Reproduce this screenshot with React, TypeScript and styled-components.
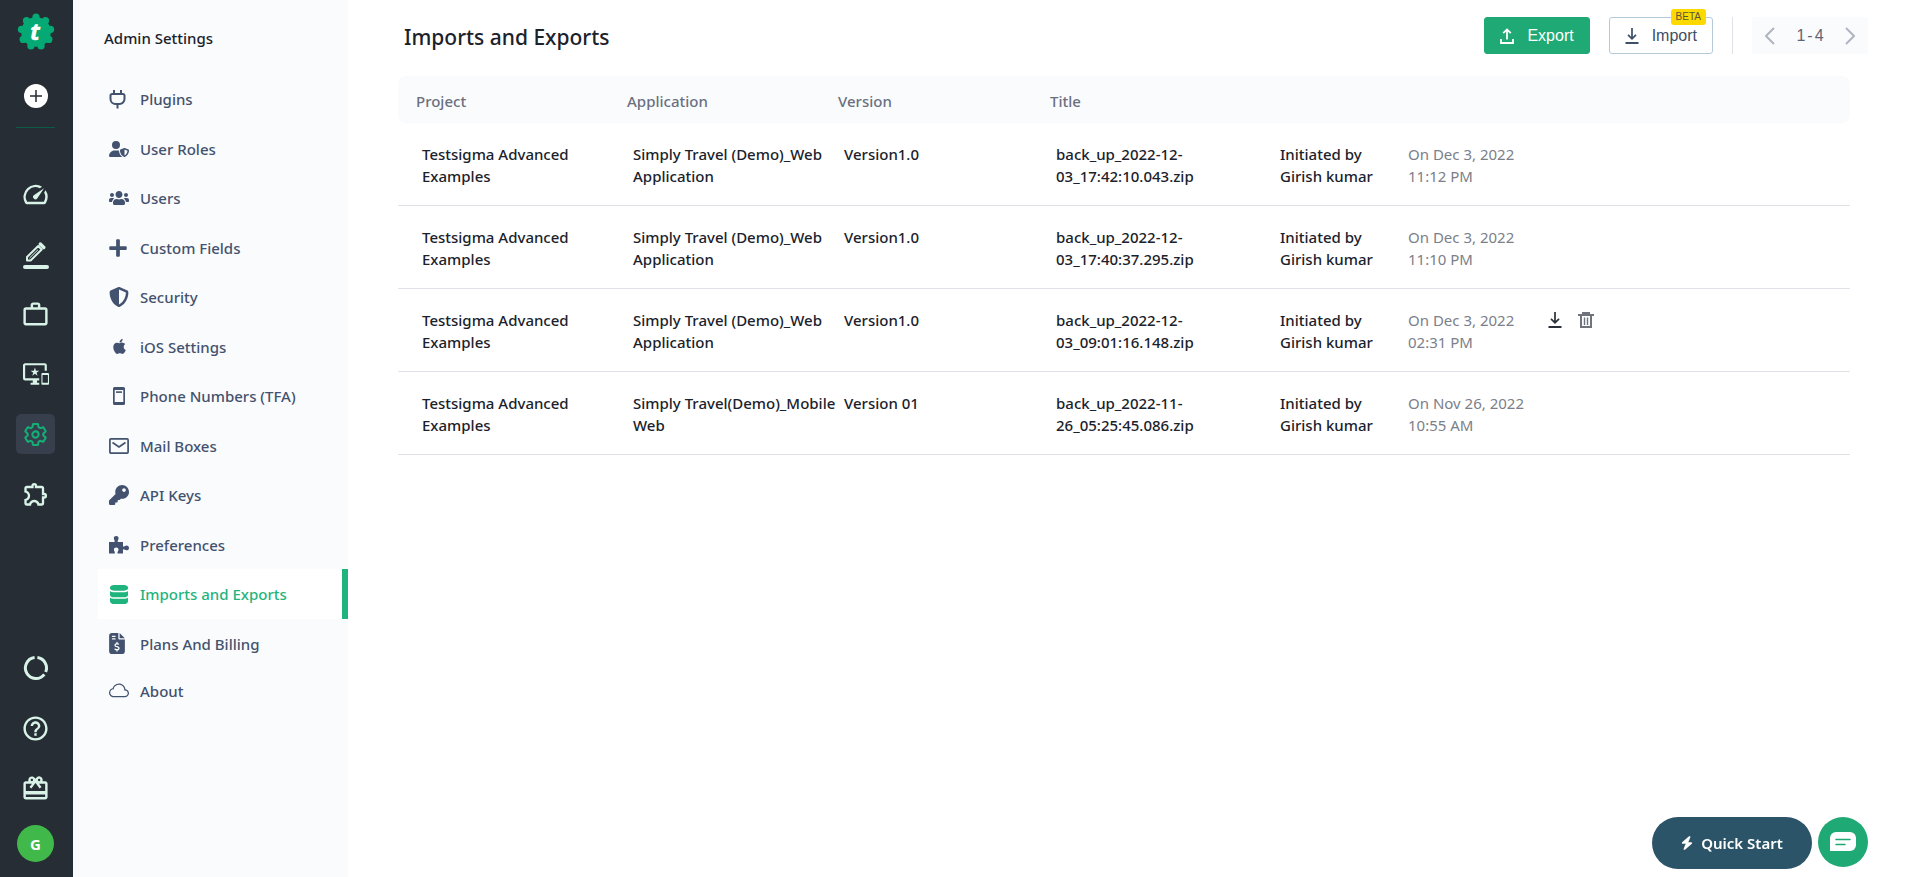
import React from 'react';
import styled, { createGlobalStyle, css } from 'styled-components';
import {
  MdSpeed,
  MdWorkOutline,
  MdOutlineImportantDevices,
  MdOutlineExtension,
  MdHelpOutline,
  MdRedeem,
} from 'react-icons/md';
import { FaUsers, FaPlus, FaApple, FaKey } from 'react-icons/fa';
import { FaUserShield, FaShieldHalved, FaFileInvoiceDollar, FaBolt } from 'react-icons/fa6';
import { IoSettingsOutline } from 'react-icons/io5';
import { BsCloud } from 'react-icons/bs';

const color = {
  rail: '#262d34',
  railTile: '#373e4c',
  railIcon: '#d9f3e8',
  panel: '#fafbfd',
  slate: '#43526e',
  ink: '#1b222b',
  muted: '#6a7080',
  faint: '#7b8089',
  line: '#e0e2e7',
  green: '#1fb47e',
  greenSolid: '#1ea975',
};

const sans = '"Segoe UI", "Noto Sans", sans-serif';
const arial = '"Liberation Sans", Arial, sans-serif';

const GlobalStyle = createGlobalStyle`
  *, *::before, *::after { box-sizing: border-box; }
  body {
    margin: 0;
    background: #fff;
    color: ${color.ink};
    font-family: ${sans};
    font-size: 15px;
    font-weight: 500;
    line-height: 22px;
  }
  button { font: inherit; cursor: pointer; }
  a { color: inherit; text-decoration: none; }
  svg { display: block; flex: none; }
`;

const Page = styled.div`
  display: flex;
  min-height: 100vh;
`;

/* ---------- Icon rail ---------- */

const Rail = styled.nav`
  position: sticky;
  top: 0;
  display: flex;
  flex: none;
  flex-direction: column;
  align-items: center;
  width: 73px;
  height: 100vh;
  padding: 13px 2px 15px 0;
  background: ${color.rail};
`;

const LogoLink = styled.a`
  display: block;
  padding-left: 1px;
`;

const AddButton = styled.button`
  display: grid;
  place-items: center;
  width: 24px;
  height: 24px;
  margin: 33px 0 19px;
  padding: 0;
  border: 0;
  border-radius: 50%;
  background: #fff;
`;

const RailRule = styled.hr`
  width: 39px;
  margin: 0 0 36px;
  border: 0;
  border-top: 1px solid #0b5a45;
`;

const RailGroup = styled.div<{ $bottom?: boolean }>`
  display: flex;
  flex-direction: column;
  ${(p) => p.$bottom && css`margin-top: auto; margin-bottom: 7px;`}
`;

const RailLink = styled.a<{ $active?: boolean }>`
  display: grid;
  place-items: center;
  width: 39px;
  height: 40px;
  margin: 10px 0;
  border-radius: 5px;
  color: ${(p) => (p.$active ? '#12b076' : color.railIcon)};
  background: ${(p) => (p.$active ? color.railTile : 'transparent')};
`;

const Gear = styled(IoSettingsOutline)`
  path { stroke-width: 42px; }
`;

const Avatar = styled.button`
  width: 37px;
  height: 37px;
  padding: 0;
  border: 0;
  border-radius: 50%;
  background: #40b84a;
  color: #fff;
  font-size: 15px;
  font-weight: 700;
`;

/* ---------- Settings menu ---------- */

const Sidebar = styled.aside`
  flex: none;
  width: 275px;
  padding: 27px 0 0 25px;
  background: ${color.panel};
`;

const SidebarTitle = styled.h2`
  margin: 0 0 25px 6px;
  font-size: 15px;
  font-weight: 500;
`;

const Menu = styled.ul`
  margin: 0;
  padding: 0;
  list-style: none;
`;

const MenuItem = styled.li`
  height: 49px;
  &:nth-child(odd) { height: 50px; }
  &:last-child { height: 46px; }
`;

const MenuLink = styled.a<{ $active?: boolean }>`
  display: flex;
  align-items: center;
  gap: 11px;
  height: 100%;
  padding-left: 11px;
  border-right: 6px solid ${(p) => (p.$active ? color.green : 'transparent')};
  background: ${(p) => (p.$active ? '#fff' : 'transparent')};
  color: ${(p) => (p.$active ? color.green : color.slate)};
`;

const MenuIcon = styled.span<{ $start?: boolean }>`
  display: flex;
  flex: none;
  align-items: center;
  justify-content: ${(p) => (p.$start ? 'flex-start' : 'center')};
  width: 20px;
`;

const InvoiceIcon = styled(FaFileInvoiceDollar)`
  width: 16px;
`;

const PlusIcon = styled(FaPlus)`
  width: 18px;
`;

/* ---------- Content ---------- */

const Main = styled.main`
  flex: 1;
  min-width: 0;
  padding: 17px 44px 96px 50px;
`;

const TopBar = styled.header`
  display: flex;
  align-items: center;
  justify-content: space-between;
  padding-left: 6px;
`;

const Title = styled.h1`
  margin: 0;
  padding-top: 2px;
  font-size: 21px;
  font-weight: 500;
  line-height: 28px;
`;

const Actions = styled.div`
  display: flex;
  align-items: center;
  gap: 19px;
  font-family: ${arial};
  font-size: 16px;
  font-weight: 400;
`;

const ActionButton = styled.button<{ $primary?: boolean }>`
  position: relative;
  display: flex;
  align-items: center;
  gap: 13px;
  height: 37px;
  padding: 0 15px;
  border: 1px solid ${(p) => (p.$primary ? color.greenSolid : '#b4cad8')};
  border-radius: 3px;
  background: ${(p) => (p.$primary ? color.greenSolid : '#fff')};
  color: ${(p) => (p.$primary ? '#fff' : '#414e68')};
`;

const Beta = styled.span`
  position: absolute;
  top: -9px;
  right: 6px;
  padding: 0 5px;
  border-radius: 3px;
  background: #fdd900;
  color: #55573a;
  font-size: 10px;
  line-height: 16px;
`;

const Divider = styled.span`
  width: 1px;
  height: 37px;
  background: ${color.line};
`;

const Pager = styled.div`
  display: flex;
  align-items: center;
  justify-content: space-between;
  width: 116px;
  height: 37px;
  padding: 0 13px;
  border-radius: 3px;
  background: ${color.panel};
  color: #5f6575;
`;

const PagerButton = styled.button`
  padding: 0;
  border: 0;
  background: none;
  color: #afb5c0;
`;

const PagerRange = styled.span`
  display: flex;
  gap: 2px;
`;

const TableWrap = styled.div`
  margin: 22px 18px 0 0;
`;

const Table = styled.table`
  width: 100%;
  table-layout: fixed;
  border-spacing: 0;
  text-align: left;
`;

const Col = styled.col<{ $w?: number }>`
  width: ${(p) => (p.$w ? `${p.$w}px` : 'auto')};
`;

const HeadCell = styled.th`
  height: 47px;
  padding: 2px 0 0 18px;
  background: ${color.panel};
  color: ${color.muted};
  font-weight: 500;
  &:first-child { border-radius: 8px 0 0 8px; }
  &:last-child { border-radius: 0 8px 8px 0; }
`;

const Cell = styled.td<{ $light?: boolean }>`
  height: 83px;
  padding: 20px 0 0 24px;
  border-bottom: 1px solid ${color.line};
  vertical-align: top;
  ${(p) => p.$light && css`color: ${color.faint}; font-weight: 400;`}
`;

const TextLine = styled.span`
  display: block;
  white-space: nowrap;
`;

const RowActions = styled.div`
  display: flex;
  gap: 16px;
  padding-top: 3px;
`;

const IconButton = styled.button<{ $muted?: boolean }>`
  padding: 0;
  border: 0;
  background: none;
  color: ${(p) => (p.$muted ? '#6f747c' : '#2a303a')};
`;

/* ---------- Floating helpers ---------- */

const Floating = styled.div`
  position: fixed;
  right: 44px;
  bottom: 8px;
  display: flex;
  gap: 6px;
  align-items: flex-start;
`;

const QuickStart = styled.button`
  display: flex;
  align-items: center;
  justify-content: center;
  gap: 8px;
  width: 160px;
  height: 52px;
  padding: 0;
  border: 0;
  border-radius: 26px;
  background: #2c5469;
  color: #fff;
  font-weight: 600;
`;

const BoltIcon = styled(FaBolt)`
  width: 12px;
`;

const ChatButton = styled.button`
  display: grid;
  place-items: center;
  width: 50px;
  height: 50px;
  padding: 0;
  border: 0;
  border-radius: 50%;
  background: ${color.greenSolid};
`;

/* ---------- Drawings ---------- */

const POINTS = 9;

const Logo = () => (
  <svg width="38" height="38" viewBox="-19 -19 38 38" role="img" aria-label="Testsigma">
    <g fill="#04a974">
      <circle r="14.8" />
      {Array.from({ length: POINTS }, (_, i) => {
        const a = (i * 2 * Math.PI) / POINTS;
        return <circle key={i} cx={14.8 * Math.sin(a)} cy={-14.8 * Math.cos(a)} r="3.6" />;
      })}
    </g>
    <text x="-1" y="8" fill="#fff" stroke="#fff" strokeWidth="0.6" fontSize="23" fontWeight="700" fontStyle="italic" fontFamily='"Open Sans", sans-serif' textAnchor="middle">
      t
    </text>
  </svg>
);

const PlusMark = () => (
  <svg width="12" height="12" viewBox="0 0 12 12" stroke={color.rail} strokeWidth="1.5">
    <path d="M6 0v12M0 6h12" />
  </svg>
);

const PencilLine = () => (
  <svg width="26" height="30" viewBox="0 0 26 30" fill="none" stroke="currentColor">
    <path d="M4 21.500V18L15.200 7l3.500 3.500L7.600 21.500z" strokeWidth="2" strokeLinejoin="round" />
    <path d="M6.400 19.200 15 10.700" strokeWidth="1" />
    <path d="M17.300 5 20.800 8.500" strokeWidth="3.400" strokeLinecap="round" />
    <path d="M2 28h22" strokeWidth="4" strokeLinecap="round" />
  </svg>
);

const UsageRing = () => (
  <svg width="26" height="26" viewBox="0 0 26 26" fill="none" stroke="currentColor" strokeWidth="3">
    <path d="M14.400 2.600A10.500 10.500 0 0 1 22.700 17" />
    <path d="M21.300 19.300A10.500 10.500 0 1 1 11.600 2.600" />
  </svg>
);

const PlugIcon = () => (
  <svg width="17" height="20" viewBox="0 0 17 20" fill="none" stroke="currentColor" strokeWidth="2">
    <path d="M5 1v4M12 1v4M8.500 15v4.500" />
    <path d="M3 5h11a1.500 1.500 0 0 1 1.500 1.500V10a5 5 0 0 1-5 5h-4a5 5 0 0 1-5-5V6.500A1.500 1.500 0 0 1 3 5z" />
  </svg>
);

const PhoneIcon = () => (
  <svg width="12" height="18" viewBox="0 0 12 18" fill="currentColor">
    <path fillRule="evenodd" d="M1.500 0h9A1.500 1.500 0 0 1 12 1.500v15a1.500 1.500 0 0 1-1.500 1.500h-9A1.500 1.500 0 0 1 0 16.500v-15A1.500 1.500 0 0 1 1.500 0zM1.700 3v12h8.600V3z" />
    <path d="M3 4.300h6v1.600H3z" />
  </svg>
);

const MailIcon = () => (
  <svg width="20" height="16" viewBox="0 0 20 16" fill="none" stroke="currentColor" strokeWidth="1.700">
    <rect x=".9" y=".9" width="18.200" height="14.200" rx="1" />
    <path d="M3.500 4.500 10 9l6.500-4.500" />
  </svg>
);

const PuzzleIcon = () => (
  <svg width="20" height="18" viewBox="0 0 20 18" fill="currentColor">
    <path d="M0 6h5.600C6.200 4.600 4.800 3.900 4.800 2.200 4.800.9 5.800 0 7.200 0s2.400.9 2.400 2.200C9.600 3.900 8.200 4.600 8.800 6H14v4.400c1.200.6 2-.9 3.600-.9 1.400 0 2.400 1 2.400 2.400s-1 2.400-2.400 2.400c-1.600 0-2.400-1.400-3.600-.8V17.500H8.600c-.6-1.500.9-2.200.9-3.700 0-1.300-1-2.200-2.300-2.200s-2.300.9-2.300 2.200c0 1.500 1.500 2.200.9 3.700H0z" />
  </svg>
);

const DatabaseIcon = () => (
  <svg width="18" height="19" viewBox="0 0 18 20" preserveAspectRatio="none" fill="currentColor">
    <path d="M4 0h10c2.200 0 4 1.200 4 2.800v1.200C17 5.800 15 6 14 6H4C3 6 1 5.800 0 4V2.800C0 1.200 1.800 0 4 0z" />
    <path d="M0 6.200C1 7.300 3 7.500 4 7.500h10c1 0 3-.2 4-1.300v4.300c0 1.500-2 2.500-4 2.500H4c-2 0-4-1-4-2.500z" />
    <path d="M0 13.200c1 1.100 3 1.300 4 1.300h10c1 0 3-.2 4-1.300v3.800c0 1.800-2 3-4 3H4c-2 0-4-1.200-4-3z" />
  </svg>
);

const UploadIcon = () => (
  <svg width="14" height="16" viewBox="0 0 14 16" fill="none" stroke="currentColor" strokeWidth="1.800">
    <path d="M7 11.500V1.500M3.200 5.200 7 1.400l3.800 3.800M1 11v4h12v-4" />
  </svg>
);

const DownloadIcon = () => (
  <svg width="14" height="16" viewBox="0 0 14 16" fill="none" stroke="currentColor" strokeWidth="1.700">
    <path d="M7 0v10.500M3 6.800l4 4 4-4" />
    <path d="M.5 15h13" strokeWidth="2" />
  </svg>
);

const TrashIcon = () => (
  <svg width="16" height="16" viewBox="0 0 16 16" fill="none" stroke="currentColor" strokeWidth="2">
    <path d="M0 3h16M5 3V1h6v2M3 3v12h10V3" />
    <path d="M6.500 5.500v7.500M9.500 5.500v7.500" strokeWidth="1.400" />
  </svg>
);

const Chevron = ({ next }: { next?: boolean }) => (
  <svg width="10" height="18" viewBox="0 0 10 18" fill="none" stroke="currentColor" strokeWidth="2">
    <path d={next ? 'M1 1l8 8-8 8' : 'M9 1 1 9l8 8'} />
  </svg>
);

const ChatIcon = () => (
  <svg width="26" height="20" viewBox="0 0 26 20">
    <path d="M6 0h14a6 6 0 0 1 6 6v7a6 6 0 0 1-6 6H0V6a6 6 0 0 1 6-6z" fill="#fff" />
    <path d="M6 7.500h14M6 12.500h9" stroke={color.greenSolid} strokeWidth="1.500" strokeLinecap="round" />
  </svg>
);

/* ---------- Data ---------- */

type MenuEntry = { label: string; icon: React.ReactNode; start?: boolean; active?: boolean };

const menu: MenuEntry[] = [
  { label: 'Plugins', icon: <PlugIcon />, start: true },
  { label: 'User Roles', icon: <FaUserShield size={20} /> },
  { label: 'Users', icon: <FaUsers size={20} /> },
  { label: 'Custom Fields', icon: <PlusIcon size={20} />, start: true },
  { label: 'Security', icon: <FaShieldHalved size={20} /> },
  { label: 'iOS Settings', icon: <FaApple size={17} /> },
  { label: 'Phone Numbers (TFA)', icon: <PhoneIcon /> },
  { label: 'Mail Boxes', icon: <MailIcon /> },
  { label: 'API Keys', icon: <FaKey size={20} /> },
  { label: 'Preferences', icon: <PuzzleIcon /> },
  { label: 'Imports and Exports', icon: <DatabaseIcon />, active: true },
  { label: 'Plans And Billing', icon: <InvoiceIcon size={21} />, start: true },
  { label: 'About', icon: <BsCloud size={20} /> },
];

const railTop = [
  { label: 'Dashboard', icon: <MdSpeed size={29} /> },
  { label: 'Create tests', icon: <PencilLine /> },
  { label: 'Test plans', icon: <MdWorkOutline size={29} /> },
  { label: 'Devices', icon: <MdOutlineImportantDevices size={26} /> },
  { label: 'Settings', icon: <Gear size={25} />, active: true },
  { label: 'Add-ons', icon: <MdOutlineExtension size={28} /> },
];

const railBottom = [
  { label: 'Usage', icon: <UsageRing /> },
  { label: 'Help', icon: <MdHelpOutline size={29} /> },
  { label: 'Rewards', icon: <MdRedeem size={29} /> },
];

type Backup = { app: string[]; version: string; file: string[]; date: string[]; actions?: boolean };

const backups: Backup[] = [
  {
    app: ['Simply Travel (Demo)_Web', 'Application'],
    version: 'Version1.0',
    file: ['back_up_2022-12-', '03_17:42:10.043.zip'],
    date: ['On Dec 3, 2022', '11:12 PM'],
  },
  {
    app: ['Simply Travel (Demo)_Web', 'Application'],
    version: 'Version1.0',
    file: ['back_up_2022-12-', '03_17:40:37.295.zip'],
    date: ['On Dec 3, 2022', '11:10 PM'],
  },
  {
    app: ['Simply Travel (Demo)_Web', 'Application'],
    version: 'Version1.0',
    file: ['back_up_2022-12-', '03_09:01:16.148.zip'],
    date: ['On Dec 3, 2022', '02:31 PM'],
    actions: true,
  },
  {
    app: ['Simply Travel(Demo)_Mobile', 'Web'],
    version: 'Version 01',
    file: ['back_up_2022-11-', '26_05:25:45.086.zip'],
    date: ['On Nov 26, 2022', '10:55 AM'],
  },
];

const Lines = ({ of }: { of: string[] }) => (
  <>
    {of.map((line) => (
      <TextLine key={line}>{line}</TextLine>
    ))}
  </>
);

export default function App() {
  return (
    <>
      <GlobalStyle />
      <Page>
        <Rail aria-label="Main">
          <LogoLink href="#home">
            <Logo />
          </LogoLink>
          <AddButton aria-label="Add">
            <PlusMark />
          </AddButton>
          <RailRule />
          <RailGroup>
            {railTop.map((r) => (
              <RailLink key={r.label} href="#" aria-label={r.label} $active={r.active}>
                {r.icon}
              </RailLink>
            ))}
          </RailGroup>
          <RailGroup $bottom>
            {railBottom.map((r) => (
              <RailLink key={r.label} href="#" aria-label={r.label}>
                {r.icon}
              </RailLink>
            ))}
          </RailGroup>
          <Avatar>G</Avatar>
        </Rail>

        <Sidebar>
          <SidebarTitle>Admin Settings</SidebarTitle>
          <Menu>
            {menu.map((m) => (
              <MenuItem key={m.label}>
                <MenuLink href="#" $active={m.active} aria-current={m.active ? 'page' : undefined}>
                  <MenuIcon $start={m.start}>{m.icon}</MenuIcon>
                  {m.label}
                </MenuLink>
              </MenuItem>
            ))}
          </Menu>
        </Sidebar>

        <Main>
          <TopBar>
            <Title>Imports and Exports</Title>
            <Actions>
              <ActionButton $primary>
                <UploadIcon />
                Export
              </ActionButton>
              <ActionButton>
                <DownloadIcon />
                Import
                <Beta>BETA</Beta>
              </ActionButton>
              <Divider />
              <Pager>
                <PagerButton aria-label="Previous page">
                  <Chevron />
                </PagerButton>
                <PagerRange>
                  <span>1</span>
                  <span>-</span>
                  <span>4</span>
                </PagerRange>
                <PagerButton aria-label="Next page">
                  <Chevron next />
                </PagerButton>
              </Pager>
            </Actions>
          </TopBar>

          <TableWrap>
            <Table>
              <colgroup>
                <Col $w={211} />
                <Col $w={211} />
                <Col $w={212} />
                <Col $w={224} />
                <Col $w={128} />
                <Col $w={140} />
                <Col />
              </colgroup>
              <thead>
                <tr>
                  <HeadCell>Project</HeadCell>
                  <HeadCell>Application</HeadCell>
                  <HeadCell>Version</HeadCell>
                  <HeadCell>Title</HeadCell>
                  <HeadCell />
                  <HeadCell />
                  <HeadCell />
                </tr>
              </thead>
              <tbody>
                {backups.map((b) => (
                  <tr key={b.file[1]}>
                    <Cell><Lines of={['Testsigma Advanced', 'Examples']} /></Cell>
                    <Cell><Lines of={b.app} /></Cell>
                    <Cell>{b.version}</Cell>
                    <Cell><Lines of={b.file} /></Cell>
                    <Cell><Lines of={['Initiated by', 'Girish kumar']} /></Cell>
                    <Cell $light><Lines of={b.date} /></Cell>
                    <Cell>
                      {b.actions && (
                        <RowActions>
                          <IconButton aria-label="Download"><DownloadIcon /></IconButton>
                          <IconButton $muted aria-label="Delete"><TrashIcon /></IconButton>
                        </RowActions>
                      )}
                    </Cell>
                  </tr>
                ))}
              </tbody>
            </Table>
          </TableWrap>
        </Main>
      </Page>

      <Floating>
        <QuickStart>
          <BoltIcon size={16} />
          Quick Start
        </QuickStart>
        <ChatButton aria-label="Open chat">
          <ChatIcon />
        </ChatButton>
      </Floating>
    </>
  );
}
